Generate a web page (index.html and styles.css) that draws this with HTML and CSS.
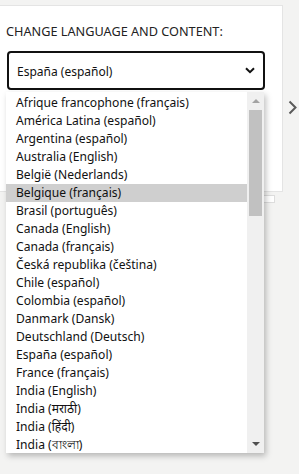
FILE: index.html
```html
<!DOCTYPE html>
<html>
<head>
<meta charset="utf-8">
<link rel="stylesheet" href="styles.css">
</head>
<body>
<div class="stage">
  <div class="column">
    <div class="panel">
      <div class="label">CHANGE LANGUAGE AND CONTENT:</div>
      <div class="select">
        <span class="value">España (español)</span>
        <svg class="chev" width="10" height="7" viewBox="0 0 10 7"><path d="M1 1.2 L5 5.2 L9 1.2" fill="none" stroke="#111" stroke-width="2"/></svg>
      </div>
    </div>
    <div class="tab"></div>
  </div>
  <div class="side">
    <svg class="next" width="9" height="15" viewBox="0 0 9 15"><path d="M1.5 1.5 L7.5 7.5 L1.5 13.5" fill="none" stroke="#5a5a5a" stroke-width="2"/></svg>
  </div>
  <div class="dropdown">
    <ul class="options">
      <li>Afrique francophone (français)</li>
      <li>América Latina (español)</li>
      <li>Argentina (español)</li>
      <li>Australia (English)</li>
      <li>België (Nederlands)</li>
      <li class="hl">Belgique (français)</li>
      <li>Brasil (português)</li>
      <li>Canada (English)</li>
      <li>Canada (français)</li>
      <li>Česká republika (čeština)</li>
      <li>Chile (español)</li>
      <li>Colombia (español)</li>
      <li>Danmark (Dansk)</li>
      <li>Deutschland (Deutsch)</li>
      <li>España (español)</li>
      <li>France (français)</li>
      <li>India (English)</li>
      <li>India (मराठी)</li>
      <li>India (हिंदी)</li>
      <li>India (বাংলা)</li>
    </ul>
    <div class="scrollbar">
      <div class="arrow up"></div>
      <div class="thumb"></div>
      <div class="arrow down"></div>
    </div>
  </div>
</div>
</body>
</html>
```
FILE: styles.css
```css
html, body {
  margin: 0;
  padding: 0;
  background: #f3f3f2;
  font-family: "Segoe UI", "Noto Sans", "Open Sans", sans-serif;
  color: #111;
}
.stage {
  position: relative;
  display: flex;
  width: 299px;
  height: 474px;
  overflow: hidden;
}
.column {
  display: flex;
  flex-direction: column;
}
.panel {
  margin-top: 5px;
  margin-left: -1px;
  width: 284px;
  height: 187px;
  box-sizing: border-box;
  background: #fff;
  border: 1px solid #e4e4e4;
  padding: 15px 0 0 7px;
}
.label {
  padding-left: 0;
  margin-left: -1px;
  font-size: 12.7px;
  line-height: 20px;
  color: #222;
}
.select {
  margin-top: 10px;
  width: 258px;
  height: 39px;
  box-sizing: border-box;
  border: 2px solid #111;
  border-radius: 4px;
  display: flex;
  align-items: center;
  justify-content: space-between;
  padding: 0 8px 0 8px;
  font-size: 12px;
}
.value { padding-top: 1px; }
.tab {
  margin: 3px 0 0 263px;
  width: 10px;
  height: 6px;
  border: 1px solid #ddd;
  background: #fff;
}
.side {
  padding: 98px 0 0 5px;
}
.dropdown {
  position: absolute;
  left: 6px;
  top: 92px;
  width: 258px;
  height: 361px;
  background: #fff;
  box-shadow: 2px 3px 6px rgba(0,0,0,0.25);
  display: flex;
}
.options {
  list-style: none;
  margin: 0;
  padding: 2px 0 0 0;
  flex: 1;
  overflow: hidden;
}
.options li {
  height: 18px;
  line-height: 18px;
  font-size: 12.1px;
  padding-left: 10px;
  white-space: nowrap;
  color: #111;
}
.options li.hl {
  background: #cfcfcf;
}
.scrollbar {
  width: 17px;
  background: #f0f0f0;
  position: relative;
}
.thumb {
  position: absolute;
  left: 2px;
  top: 18px;
  width: 13px;
  height: 106px;
  background: #c1c1c1;
}
.arrow {
  position: absolute;
  left: 5px;
  width: 0;
  height: 0;
  border-left: 4px solid transparent;
  border-right: 4px solid transparent;
}
.arrow.up {
  top: 7px;
  border-bottom: 4px solid #a3a3a3;
}
.arrow.down {
  bottom: 7px;
  border-top: 4px solid #505050;
}
```
